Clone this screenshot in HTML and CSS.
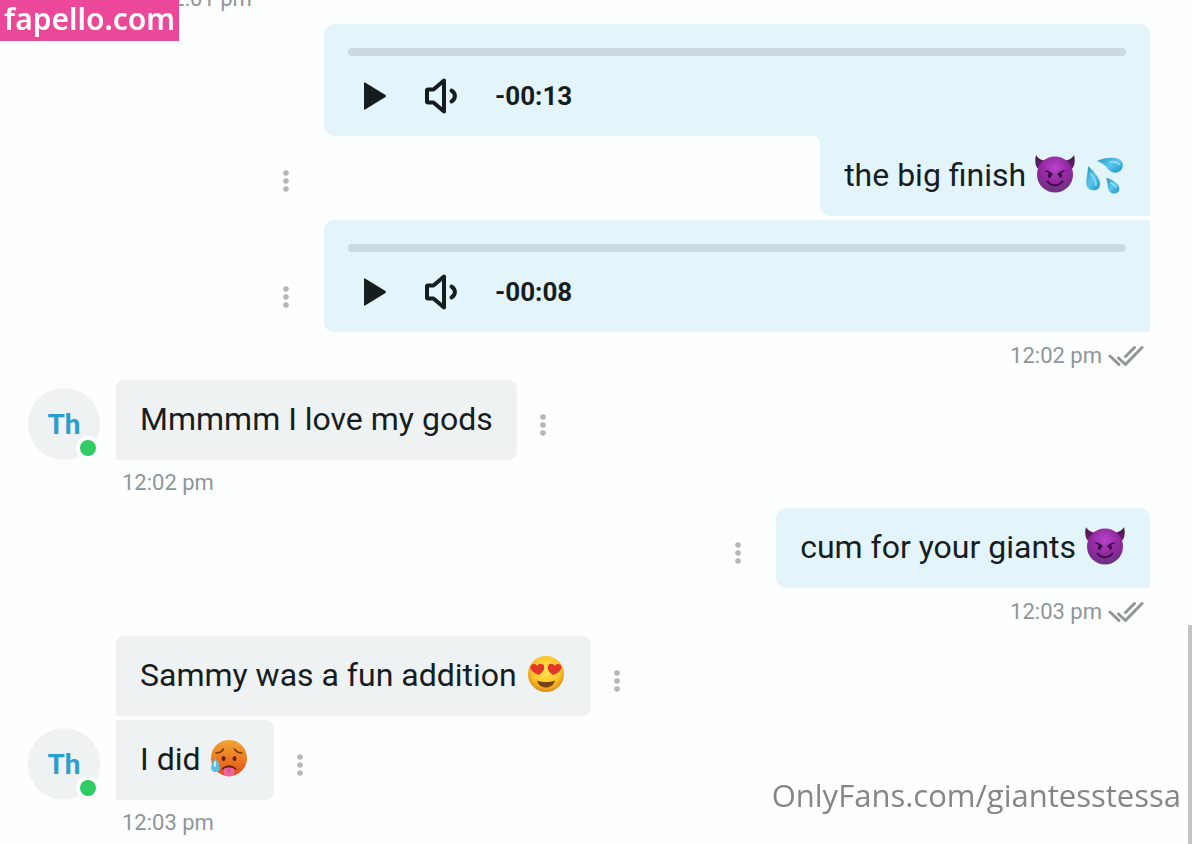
FILE: index.html
```html
<!DOCTYPE html>
<html lang="en">
<head>
  <meta charset="UTF-8" />
  <meta name="viewport" content="width=device-width, initial-scale=1.0"/>
  <title>Chat</title>
  <link rel="stylesheet" href="styles.css">
</head>
<body>
  <!-- ICONS -->
  <svg class="sprite" aria-hidden="true">
    <defs>
      <radialGradient id="g-devil" cx="50%" cy="32%" r="70%">
        <stop offset="0" stop-color="#b845cc"/>
        <stop offset="0.55" stop-color="#93279f"/>
        <stop offset="1" stop-color="#66347f"/>
      </radialGradient>
      <linearGradient id="g-horn" x1="0" y1="0" x2="0" y2="1">
        <stop offset="0" stop-color="#3f1640"/>
        <stop offset="1" stop-color="#75247f"/>
      </linearGradient>
      <linearGradient id="g-drop" x1="0" y1="0" x2="1" y2="1">
        <stop offset="0" stop-color="#2592c4"/>
        <stop offset="0.5" stop-color="#5bc6ea"/>
        <stop offset="1" stop-color="#1793d0"/>
      </linearGradient>
      <radialGradient id="g-love" cx="50%" cy="40%" r="60%">
        <stop offset="0" stop-color="#ffe64f"/>
        <stop offset="0.65" stop-color="#fbc52b"/>
        <stop offset="1" stop-color="#dc8a16"/>
      </radialGradient>
      <linearGradient id="g-hot" x1="0" y1="0" x2="0" y2="1">
        <stop offset="0" stop-color="#f2a434"/>
        <stop offset="0.5" stop-color="#ec7d22"/>
        <stop offset="1" stop-color="#dd4a1c"/>
      </linearGradient>
    </defs>

    <symbol id="play" viewBox="0 0 24 28">
      <path d="M1 1v26q0 1 1 .4L22.500 15q1-1 0-2L2 .6Q1 0 1 1z" fill="#161d1f"/>
    </symbol>

    <symbol id="volume" viewBox="0 0 36 36">
      <path d="M4 12.500q0-1 1-1h5.500L21 2.500v31L10.500 24.500H5q-1 0-1-1z" fill="none" stroke="#161d1f" stroke-width="4" stroke-linejoin="round"/>
      <path d="M28.500 12.500c4.500 3 4.500 8 0 11" fill="none" stroke="#161d1f" stroke-width="4" stroke-linecap="round"/>
    </symbol>

    <symbol id="dots" viewBox="0 0 6 22">
      <circle cx="3" cy="3" r="2.800"/>
      <circle cx="3" cy="11" r="2.800"/>
      <circle cx="3" cy="19" r="2.800"/>
    </symbol>

    <symbol id="read" viewBox="0 0 36 22">
      <path d="M2 11l9 8.500M10.500 13l7 6.500L34 2.500M17.500 11.500l9-9" fill="none" stroke="currentColor" stroke-width="3" stroke-linecap="round" stroke-linejoin="miter"/>
    </symbol>

    <symbol id="devil" viewBox="0 0 40 40">
      <path d="M1 1C-.5 7 0 14 5 16l8-9.500C7 7 3 4.500 1 1zM39 1c1.500 6 1 13-4 15L27 6.500C33 7 37 4.500 39 1z" fill="url(#g-horn)"/>
      <circle cx="20" cy="20.500" r="18" fill="url(#g-devil)"/>
      <path d="M11 17c2.500.5 4.500 1.500 6 3.500M29 17c-2.500.5-4.500 1.500-6 3.500" fill="none" stroke="#37083f" stroke-width="1.600" stroke-linecap="round"/>
      <ellipse cx="14.500" cy="21.500" rx="1.700" ry="2.600" fill="#37083f"/>
      <ellipse cx="25.500" cy="21.500" rx="1.700" ry="2.600" fill="#37083f"/>
      <path d="M12.500 27.500c3.500 5 11.500 5 15 0" fill="none" stroke="#37083f" stroke-width="1.800" stroke-linecap="round"/>
    </symbol>

    <symbol id="drops" viewBox="0 0 40 40">
      <path d="M12 7C20 3 29 3 34 5c5 3 5 9 1 12-4 3-9 2-12-2-3-4-6-6-11-8z" fill="url(#g-drop)"/>
      <path d="M3 12c6 5 13 13 12 19-1 5-5 6-8 5-6-1-6-6-5.500-11C2 21 3 17 3 12z" fill="url(#g-drop)"/>
      <path d="M21 24c6 1 12 5 13 9s-1 6-4 6.500c-4 .5-6-2-7-5.500-.5-4-.5-7-2-10z" fill="url(#g-drop)"/>
      <path d="M25 8c4-.5 7 0 9 2M6 20c3 4 5 7 5 11M26 29c3 1 4 2 5 4" fill="none" stroke="#8ddaf2" stroke-width="2" stroke-linecap="round"/>
    </symbol>

    <symbol id="love" viewBox="0 0 40 40">
      <circle cx="20" cy="20" r="18" fill="url(#g-love)"/>
      <path d="M13 21C8 19.500 4 16 4.500 12.500c1-3 5-3.500 6.500-.5 2-3 6-3 7 0 1 4-2 7-5.500 9z" fill="#e5352b"/>
      <path d="M27 21c5-1.500 9-5 8.500-8.500-1-3-5-3.500-6.500-.5-2-3-6-3-7 0-1 4 2 7 5 9z" fill="#e5352b"/>
      <path d="M11 26.500c5 2 13 2 18 0-1 4.500-5 7-9 7s-8-2.500-9-7z" fill="#7a4212"/>
    </symbol>

    <symbol id="hot" viewBox="0 0 40 40">
      <circle cx="20" cy="20" r="18" fill="url(#g-hot)"/>
      <path d="M7 15c3 0 6-1.500 7.500-4M33 15c-3 0-6-1.500-7.500-4" fill="none" stroke="#7d3510" stroke-width="1.600" stroke-linecap="round"/>
      <ellipse cx="14.500" cy="20.500" rx="2" ry="2.500" fill="#6a200c"/>
      <ellipse cx="25.500" cy="20.500" rx="2" ry="2.500" fill="#6a200c"/>
      <path d="M12.500 32c1-6 14-6 15 0z" fill="#6a200c"/>
      <path d="M14.500 31c3-2 8-2 11 0v3c0 6-11 6-11 0z" fill="#f0649c"/>
      <path d="M20 31v3" stroke="#cf3f7c" stroke-width="1.500"/>
      <path d="M6 20c3 4 5 7 5 9.500 0 6-9 6-9 0C2 27 4 24 6 20z" fill="#59bde6"/>
      <path d="M6 24v4" stroke="#c9effa" stroke-width="2" stroke-linecap="round"/>
    </symbol>
  </svg>

  <main class="chat">
    <p class="time time-first">12:01 pm</p>

    <article class="message sent">
      <button class="more" type="button" aria-label="More"><svg><use href="#dots"/></svg></button>
      <div class="content wide">
        <div class="bubble audio first">
          <progress class="track" value="0" max="13" aria-label="Playback"></progress>
          <div class="controls">
            <button type="button" aria-label="Play"><svg class="play"><use href="#play"/></svg></button>
            <button type="button" aria-label="Mute"><svg class="volume"><use href="#volume"/></svg></button>
            <span class="left">-00:13</span>
          </div>
        </div>
        <p class="bubble text attached">the big finish <svg class="emoji" role="img" aria-label="devil"><use href="#devil"/></svg> <svg class="emoji" role="img" aria-label="drops"><use href="#drops"/></svg></p>
      </div>
    </article>

    <article class="message sent">
      <button class="more" type="button" aria-label="More"><svg><use href="#dots"/></svg></button>
      <div class="content wide">
        <div class="bubble audio">
          <progress class="track" value="0" max="8" aria-label="Playback"></progress>
          <div class="controls">
            <button type="button" aria-label="Play"><svg class="play"><use href="#play"/></svg></button>
            <button type="button" aria-label="Mute"><svg class="volume"><use href="#volume"/></svg></button>
            <span class="left">-00:08</span>
          </div>
        </div>
      </div>
    </article>
    <p class="time time-sent">12:02 pm <svg class="read"><use href="#read"/></svg></p>

    <article class="message received">
      <div class="avatar">Th<span class="online"></span></div>
      <p class="bubble text">Mmmmm I love my gods</p>
      <button class="more" type="button" aria-label="More"><svg><use href="#dots"/></svg></button>
    </article>
    <p class="time">12:02 pm</p>

    <article class="message sent">
      <button class="more" type="button" aria-label="More"><svg><use href="#dots"/></svg></button>
      <p class="bubble text single">cum for your giants <svg class="emoji" role="img" aria-label="devil"><use href="#devil"/></svg></p>
    </article>
    <p class="time time-sent">12:03 pm <svg class="read"><use href="#read"/></svg></p>

    <article class="message received no-avatar">
      <p class="bubble text">Sammy was a fun addition <svg class="emoji" role="img" aria-label="heart eyes"><use href="#love"/></svg></p>
      <button class="more" type="button" aria-label="More"><svg><use href="#dots"/></svg></button>
    </article>

    <article class="message received">
      <div class="avatar">Th<span class="online"></span></div>
      <p class="bubble text last">I did <svg class="emoji" role="img" aria-label="hot face"><use href="#hot"/></svg></p>
      <button class="more" type="button" aria-label="More"><svg><use href="#dots"/></svg></button>
    </article>
    <p class="time">12:03 pm</p>
  </main>

  <div class="site-tag">fapello.com</div>
  <div class="watermark">OnlyFans.com/giantesstessa</div>
  <div class="scroll-thumb"></div>
</body>
</html>
```
FILE: styles.css
```css
:root {
  --bg: #fdfefe;
  --sent: #e3f4fb;
  --received: #eff2f3;
  --text: #161d1f;
  --muted: #8e9699;
  --blue: #2a9fce;
}

* {
  margin: 0;
  padding: 0;
  box-sizing: border-box;
}

body {
  height: 100vh;
  overflow: hidden;
  background-color: var(--bg);
  color: var(--text);
  font-family: Roboto, sans-serif;
}

button {
  display: flex;
  align-items: center;
  justify-content: center;
  background: none;
  border: none;
  cursor: pointer;
}

.sprite {
  position: absolute;
  width: 0;
  height: 0;
}

/* the log is scrolled, its first time row is cut by the top edge */
.chat {
  display: flex;
  flex-direction: column;
  gap: 4px;
  margin-top: -24px;
  padding: 0 42px 0 28px;
}

.message {
  display: flex;
  align-items: flex-end;
}

.sent {
  justify-content: flex-end;
}

.content {
  display: flex;
  flex-direction: column;
  align-items: flex-end;
}

.wide {
  width: 826px;
  max-width: 84%;
}

.bubble {
  background-color: var(--received);
  border-radius: 8px;
}

.received .bubble {
  border-bottom-left-radius: 0;
}

.received .last {
  border-top-left-radius: 0;
}

.sent .bubble {
  background-color: var(--sent);
  border-radius: 10px 0 0 10px;
}

.sent .first,
.sent .single {
  border-top-right-radius: 10px;
}

.text {
  padding: 19px 24px 21px;
  font-size: 32px;
  line-height: 40px;
}

.sent .attached {
  position: relative;
  border-top-left-radius: 0;
}

.attached::before {
  content: "";
  position: absolute;
  top: 0;
  left: -8px;
  width: 8px;
  height: 8px;
  background: radial-gradient(circle at 0 100%, var(--bg) 8px, var(--sent) 8px);
}

.emoji {
  width: 42px;
  height: 40px;
  margin-top: -4px;
  vertical-align: -8px;
}

.audio {
  width: 100%;
  padding: 24px;
}

.track {
  display: block;
  width: 100%;
  height: 8px;
  appearance: none;
  border: none;
  border-radius: 4px;
  background-color: #cbdae2;
  overflow: hidden;
}

.track::-webkit-progress-bar {
  background-color: #cbdae2;
}

.controls {
  display: flex;
  align-items: center;
  gap: 36px;
  height: 56px;
  margin: 12px 0 -12px;
  padding-left: 15px;
}

.play {
  width: 24px;
  height: 28px;
}

.volume {
  width: 36px;
  height: 36px;
}

.left {
  font-size: 26px;
  font-weight: 700;
  line-height: 32px;
}

.more {
  width: 48px;
  height: 70px;
  margin: 0 14px;
}

.more svg {
  width: 6px;
  height: 22px;
  fill: #b3b7b8;
}

.received .more {
  margin: 0 2px;
}

.avatar {
  position: relative;
  width: 72px;
  height: 72px;
  margin-right: 16px;
  border-radius: 50%;
  background-color: var(--received);
  color: var(--blue);
  font-size: 28px;
  font-weight: 700;
  line-height: 74px;
  text-align: center;
}

.online {
  position: absolute;
  right: 0;
  bottom: 0;
  width: 24px;
  height: 24px;
  border: 4px solid var(--bg);
  border-radius: 50%;
  background-color: #2ecc62;
}

.no-avatar {
  padding-left: 88px;
}

.time {
  height: 40px;
  padding-left: 94px;
  color: var(--muted);
  font-size: 22px;
  line-height: 38px;
}

.time-first {
  height: 44px;
  padding-left: 132px;
  line-height: 46px;
}

.time-sent {
  display: flex;
  align-items: center;
  justify-content: flex-end;
  gap: 6px;
  padding-right: 6px;
}

.read {
  width: 36px;
  height: 22px;
}

.site-tag {
  position: fixed;
  top: 0;
  left: 0;
  padding: 1px 4px 4px;
  background-color: #ec4899;
  color: #fff;
  font-family: "Noto Sans", sans-serif;
  font-size: 30px;
  font-weight: 600;
  line-height: 36px;
}

.watermark {
  position: fixed;
  right: 11px;
  bottom: 29px;
  color: #868686;
  font-family: "Open Sans", sans-serif;
  font-size: 31px;
  font-weight: 400;
  line-height: 40px;
}

.scroll-thumb {
  position: fixed;
  right: 0;
  bottom: 0;
  width: 4px;
  height: 26%;
  background-color: #c4c4c4;
}
```
